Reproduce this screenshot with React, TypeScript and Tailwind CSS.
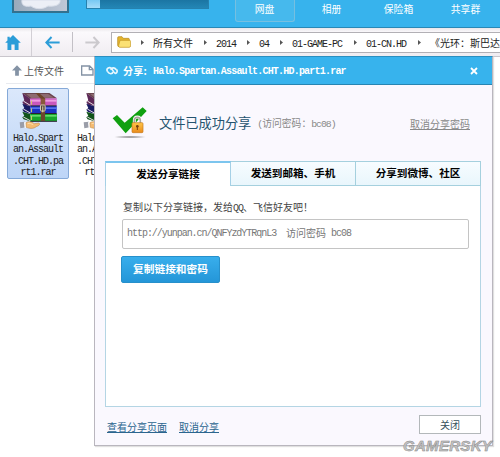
import React, { useState } from 'react';
import clsx from 'clsx';

const NAV = ['网盘', '相册', '保险箱', '共享群'];
const TABS = ['发送分享链接', '发送到邮箱、手机', '分享到微博、社区'];
const FILE_LINES = ['Halo.Spart', 'an.Assault', '.CHT.HD.pa', 'rt1.rar'];

// half-width latin run, 5px per character next to 10px hanzi
function Latin({ children, className = 'tracking-[-1px]' }: { children: React.ReactNode; className?: string }) {
  return (
    <span className={clsx("font-['Liberation_Mono','Noto_Sans_CJK_SC',monospace] leading-none whitespace-pre", className)}>
      {children}
    </span>
  );
}

function RarIcon() {
  return (
    <svg viewBox="0 0 118 114" preserveAspectRatio="none" className="h-[38px] w-[39px] shrink-0">
      <path d="M10 3L92 3L115 19L34 21Z" fill="#69454f" />
      <path d="M22 6L88 6L106 17L37 18Z" fill="#8d6a70" />
      <path d="M10 3L34 20V42L15 38L10 30L16 25Z" fill="#5d2857" />
      <path d="M34 19H114V41H34Z" fill="#c958bd" />
      <path d="M34 23H114V29H34Z" fill="#ee9ce2" />
      <path d="M10 35L34 43V65L15 60L10 53L16 48Z" fill="#181b62" />
      <path d="M34 42H114V64H34Z" fill="#1b32c3" />
      <path d="M34 46H114V51H34Z" fill="#5874ee" />
      <path d="M10 59L34 66V88L14 82L10 76L16 71Z" fill="#105319" />
      <path d="M34 65H115V87L34 88Z" fill="#17a52c" />
      <path d="M34 69H114V74H34Z" fill="#64d96b" />
      <path d="M13 27L34 40M13 51L34 63M13 75L34 86" stroke="#e9dfe7" strokeWidth="3" />
      <path d="M34 41.500H114M34 64.500H114M34 88H115" stroke="#27202f" strokeWidth="3" />
      <path d="M38 26V38M38 49V61M38 72V84" stroke="#d8cc6a" strokeWidth="3" />
      <path d="M50 3H60L79 19V87H66V20Z" fill="#6d452b" />
      <path d="M66 20H79V40H66Z" fill="#88583a" />
      <rect x="65" y="39" width="14" height="18" rx="2" fill="#50423a" stroke="#d9cfb6" strokeWidth="3" />
      <path d="M72 43V61" stroke="#e9dfb0" strokeWidth="3" />
      <path d="M2 91L18 89L21 106L4 109Z" fill="#9a9da8" />
      <path d="M15 91L21 90L22 107L17 108Z" fill="#fff" />
      <path d="M21 92C30 86 40 90 46 95L60 93C66 96 60 102 52 104C45 111 31 110 22 106Z" fill="#f4bb72" stroke="#b77935" strokeWidth="1.500" />
      <path d="M26 95C33 92 37 96 43 98" stroke="#fbdfaf" strokeWidth="3" fill="none" />
    </svg>
  );
}

function FileTile({ selected }: { selected?: boolean }) {
  return (
    <div
      className={clsx(
        'flex h-[91px] w-[62px] shrink-0 flex-col items-center rounded-[2px] border pt-[3px]',
        selected ? 'border-[#85a9d8] bg-linear-to-b from-[#dbe8fb] to-[#bdd5f7]' : 'border-transparent',
      )}
    >
      <RarIcon />
      <div className="mt-[3px] flex flex-col items-center text-[10px] text-[#222]">
        {FILE_LINES.map(line => <div key={line} className="flex h-[11.5px] items-center"><Latin>{line}</Latin></div>)}
      </div>
    </div>
  );
}

function Crumb({ children, className }: { children: React.ReactNode; className?: string }) {
  return (
    <>
      <svg viewBox="0 0 3 5" className="h-[5px] w-[3px] shrink-0"><path d="M0 0L3 2.500L0 5Z" fill="#555" /></svg>
      <span className={clsx('shrink-0 whitespace-nowrap', className)}>{children}</span>
    </>
  );
}

function CheckIcon() {
  return (
    <svg viewBox="0 0 108 96" className="h-[32px] w-[36px] shrink-0">
      <defs>
        <radialGradient id="shade"><stop stopColor="#777" /><stop offset="1" stopColor="#777" stopOpacity="0" /></radialGradient>
        <linearGradient id="lock" x2="0" y2="1"><stop stopColor="#ffc648" /><stop offset="1" stopColor="#e98a1b" /></linearGradient>
      </defs>
      <ellipse cx="54" cy="90" rx="51" ry="4" fill="url(#shade)" />
      <path d="M2 34L15 24L38 47L92 1L104 12L41 79Z" fill="#10a010" />
      <path d="M67 50V40C67 27 85 27 85 40V50" fill="none" stroke="#fff" strokeWidth="9" />
      <path d="M67 50V40C67 28 85 28 85 40V50" fill="none" stroke="#aaa79e" strokeWidth="5" />
      <rect x="60" y="47" width="33" height="30" rx="3" fill="url(#lock)" stroke="#c77a1a" strokeWidth="2" />
      <circle cx="76" cy="58" r="4" fill="#74400f" />
      <path d="M76 58V69" stroke="#74400f" strokeWidth="3" />
    </svg>
  );
}

function ShareDialog() {
  const [tab, setTab] = useState(0);

  return (
    <div role="dialog" className="absolute top-[56px] left-[94px] flex h-[390px] w-[399px] flex-col border border-t-[#2b8fc0] border-r-[#b9b6be] border-b-[#b9b6be] border-l-[#b9b6be] bg-[#faf8fe] shadow-[1px_1px_1px_#e0e0e0]">
      <div className="flex h-[28px] shrink-0 items-center border-b border-[#2785b2] bg-[#37b3ed] pr-[14px] pl-[11px] text-white">
        <svg viewBox="0 0 36 30" className="h-[10px] w-[12px]" fill="none" stroke="#e8f8ff" strokeWidth="5">
          <path d="M5 17C0 11 5 4 12 5C20 6 21 20 28 22C34 21 35 14 31 10" />
          <path d="M31 11C25 3 16 4 15 12M5 17C10 25 19 25 21 18" />
        </svg>
        <h2 className="ml-[5px] flex items-center text-[10px] font-bold">
          <span className="w-[30px] tracking-[0.3px] whitespace-nowrap">分享:</span>
          <Latin className="pt-[2px] tracking-[-0.790px]">Halo.Spartan.Assault.CHT.HD.part1.rar</Latin>
        </h2>
        <button className="ml-auto">
          <svg viewBox="0 0 8 8" className="size-[8px]" stroke="#fff" strokeWidth="1.800"><path d="M1 1L7 7M7 1L1 7" /></svg>
        </button>
      </div>

      <div className="flex h-[76px] shrink-0 items-center pr-[22px] pl-[17px]">
        <CheckIcon />
        <span className="ml-[11px] text-[13.200px] whitespace-nowrap text-[#24536f]">文件已成功分享</span>
        <span className="ml-[6px] text-[9.800px] whitespace-nowrap text-[#888]">
          <Latin>(</Latin>访问密码：<Latin>bc08)</Latin>
        </span>
        <a href="#" className="ml-auto text-[10px] whitespace-nowrap text-[#888] underline">取消分享密码</a>
      </div>

      <div className="mx-[10px] flex h-[246px] w-[376px] shrink-0 flex-col border border-[#b4d5e4] bg-white">
        <div className="-mx-px -mt-px flex h-[25px] shrink-0">
          {TABS.map((label, i) => (
            <button
              key={label}
              onClick={() => setTab(i)}
              className={clsx(
                'flex-1 pb-[2px] text-center text-[10.600px] font-bold whitespace-nowrap text-black',
                i === tab
                  ? 'border-t-2 border-r border-l border-t-[#7cc5ee] border-r-[#a5d0e6] border-l-[#a5d0e6] bg-white'
                  : 'border-t border-r border-b border-[#a5d0de] bg-linear-to-b from-[#f7fcff] to-[#e9f6fc]',
              )}
            >
              {label}
            </button>
          ))}
        </div>
        <div className="flex flex-col items-start pt-[14px] pl-[15px]">
          <p className="ml-[2px] text-[10px] leading-[14px] whitespace-nowrap text-[#444]">
            复制以下分享链接，发给<Latin>QQ</Latin>、飞信好友吧！
          </p>
          <div className="mt-[5px] ml-px flex h-[30px] w-[347px] items-center rounded-[2px] border border-[#c4c4c4] bg-white pb-[3px] pl-[4px] text-[10px] whitespace-pre text-[#777]">
            <Latin className="pt-[2px] tracking-[-1.030px]">http://yunpan.cn/QNFYzdYTRqnL3  </Latin>访问密码<Latin className="pt-[2px] tracking-[-1px]"> bc08</Latin>
          </div>
          <button className="mt-[7px] h-[27px] w-[99px] rounded-[2px] border border-[#2790cb] bg-linear-to-b from-[#38aeec] to-[#2496d8] text-[10.700px] font-bold whitespace-nowrap text-white">
            复制链接和密码
          </button>
        </div>
      </div>

      <div className="flex flex-1 items-center pr-[11px] pl-[12px] text-[10px] text-[#2b658f]">
        <a href="#" className="underline">查看分享页面</a>
        <a href="#" className="ml-[12px] underline">取消分享</a>
        <button className="-mt-[3px] ml-auto h-[19px] w-[62px] border border-[#b3b8ba] bg-white pb-px text-[#34505b]">关闭</button>
      </div>
    </div>
  );
}

export default function App() {
  return (
    <div className="relative h-[457px] w-[500px] overflow-hidden bg-white font-['Noto_Sans_CJK_SC',sans-serif]">
      <header className="flex h-[28px] items-start border-b border-[#2888b6] bg-[#37b3ed]">
        <div className="ml-[12px] h-[13px] w-[57px] border-2 border-t-0 border-[#32718f] bg-linear-to-r from-[#9aaabb] to-[#c0c8d7]">
          <svg viewBox="0 0 53 11" className="h-[11px] w-[53px]">
            <path d="M8 0C7 6 12 7 17 6C22 10 30 9 34 6C42 7 47 4 46 0Z" fill="#eceff6" stroke="#d8dee9" />
          </svg>
        </div>
        <div className="ml-[17px] h-[9px] w-[123px] border border-t-0 border-[#2681ae] bg-linear-to-b from-[#1b75a3] to-[#2386b5]">
          <div className="h-[8px] w-[13px] bg-linear-to-b from-[#77c8f3] to-[#a5dcfa]" />
        </div>
        <nav className="ml-[22px] flex">
          {NAV.map((item, i) => (
            <div key={item} className="flex w-[67px] justify-center text-[9.800px] whitespace-nowrap text-white">
              <span
                className={clsx(
                  'flex h-[22px] w-[60px] items-center justify-center pb-[3px]',
                  i === 0 && 'rounded-b-[3px] border border-t-0 border-[#76bfe0] bg-[#46b9ed]',
                )}
              >
                {item}
              </span>
            </div>
          ))}
        </nav>
      </header>

      <div className="flex h-[29px] items-center border-b border-[#c9c6cc] bg-linear-to-b from-[#e9e6ea] via-[#fbf9fc] via-15% to-[#f0edf1]">
        <svg viewBox="0 0 48 46" className="ml-[5px] h-[15px] w-[16px]" fill="#2c9dd8">
          <path d="M24 0L48 24H41V46H29V29H19V46H7V24H0L7 17V5H14V10Z" />
        </svg>
        <div className="ml-[10px] h-full w-px bg-[#d2cfd5]" />
        <svg viewBox="0 0 46 40" className="ml-[13px] h-[13px] w-[15px]" fill="none" stroke="#2c9dd8" strokeWidth="6">
          <path d="M45 20H5M20 3L4 20L20 37" />
        </svg>
        <div className="ml-[12px] h-[20px] w-px bg-[#c3c0c6]" />
        <svg viewBox="0 0 46 40" className="ml-[12px] h-[13px] w-[15px]" fill="none" stroke="#cbc9cd" strokeWidth="6">
          <path d="M1 20H41M26 3L42 20L26 37" />
        </svg>
        <div className="ml-[11px] flex h-[21px] min-w-0 flex-1 items-center overflow-hidden border border-r-0 border-[#b2b0b5] bg-white pl-[5px] text-[10px] text-[#222]">
          <svg viewBox="0 0 42 36" className="mr-[10px] h-[12px] w-[14px] shrink-0">
            <path d="M2 5Q2 2 5 2H15L19 7H34Q37 7 37 10V29L6 32Q2 32 2 28Z" fill="#e4b52f" stroke="#b58619" strokeWidth="2" />
            <path d="M9 13H37Q41 13 41 17V30Q40 34 36 34H8Q4 33 5 28Z" fill="#fbe174" stroke="#c0931e" strokeWidth="2" />
          </svg>
          <Crumb className="mr-[11px] ml-[9px]">所有文件</Crumb>
          <Crumb className="mr-[11px] ml-[9px]"><Latin>2014</Latin></Crumb>
          <Crumb className="mr-[11px] ml-[9px]"><Latin>04</Latin></Crumb>
          <Crumb className="mr-[12px] ml-[9px]"><Latin>01-GAME-PC</Latin></Crumb>
          <Crumb className="mr-[12px] ml-[9px]"><Latin>01-CN.HD</Latin></Crumb>
          <Crumb className="ml-[9px]">《光环：斯巴达</Crumb>
        </div>
      </div>

      <div className="mx-[6px] flex h-[27px] items-center border-b border-[#e8eaef] text-[10px] text-[#555]">
        <svg viewBox="0 0 32 34" className="ml-[6px] h-[11px] w-[10px]" fill="#8493a5"><path d="M16 0L32 17H22V34H10V17H0Z" /></svg>
        <span className="ml-[2px] whitespace-nowrap">上传文件</span>
        <svg viewBox="0 0 39 33" className="ml-[17px] h-[11px] w-[13px]" fill="none" stroke="#8493a5" strokeWidth="4">
          <path d="M2 3H26L36 13V30H2ZM25 3V14H36" />
        </svg>
      </div>

      <div className="flex gap-[2px] pt-[4px] pl-[7px]">
        <FileTile selected />
        <FileTile />
      </div>

      <ShareDialog />

      <div className="absolute top-[437px] left-[403px] font-['Liberation_Sans',sans-serif] text-[15px] leading-[17px] font-bold tracking-[0.3px] text-[#c6c6c6] italic [-webkit-text-stroke:0.5px_#858585]">
        GAMERSKY
      </div>
    </div>
  );
}
